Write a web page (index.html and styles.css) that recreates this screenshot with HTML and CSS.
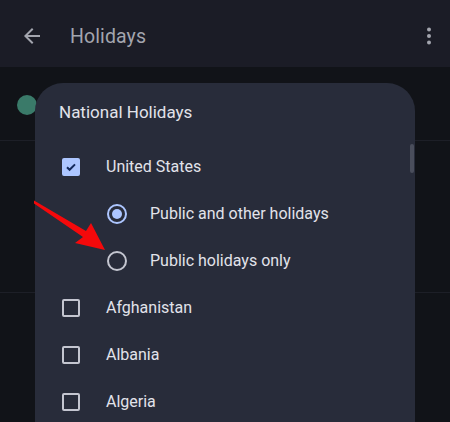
FILE: index.html
```html
<!DOCTYPE html>
<html>
<head>
<meta charset="utf-8">
<link rel="stylesheet" href="styles.css">
</head>
<body>
<div class="app">
  <header class="topbar">
    <svg class="back" width="24" height="24" viewBox="0 0 24 24"><path d="M20 11H7.83l5.59-5.59L12 4l-8 8 8 8 1.41-1.41L7.83 13H20v-2z" fill="#a3a5ae"/></svg>
    <span class="title">Holidays</span>
    <svg class="more" width="24" height="24" viewBox="0 0 24 24"><circle cx="12" cy="5.5" r="2" fill="#a3a5ae"/><circle cx="12" cy="12" r="2" fill="#a3a5ae"/><circle cx="12" cy="18.5" r="2" fill="#a3a5ae"/></svg>
  </header>
  <div class="bgrow first"><span class="dot"></span></div>
  <div class="bgrow second"></div>
  <div class="bgrow third"></div>

  <div class="dialog">
    <div class="scrollbar"></div>
    <h2 class="dtitle">National Holidays</h2>
    <div class="row">
      <span class="cb checked"><svg width="14" height="14" viewBox="0 0 14 14"><path d="M3 7.2l2.6 2.6L11 4.4" stroke="#142a5c" stroke-width="2" fill="none"/></svg></span>
      <span class="label">United States</span>
    </div>
    <div class="row sub">
      <span class="radio on"></span>
      <span class="label">Public and other holidays</span>
    </div>
    <div class="row sub">
      <span class="radio"></span>
      <span class="label">Public holidays only</span>
    </div>
    <div class="row"><span class="cb"></span><span class="label">Afghanistan</span></div>
    <div class="row"><span class="cb"></span><span class="label">Albania</span></div>
    <div class="row"><span class="cb"></span><span class="label">Algeria</span></div>
  </div>

  <svg class="arrow" width="450" height="422" viewBox="0 0 450 422">
    <polygon points="34,200.5 86,231 91,223 105,250 75,243 83,237 34,203.5" fill="#f5090b"/>
  </svg>
</div>
</body>
</html>
```
FILE: styles.css
```css
* { box-sizing: border-box; margin: 0; padding: 0; }
html, body { width: 450px; height: 422px; overflow: hidden; }
body { background: #111318; font-family: Roboto, "Noto Sans", sans-serif; }
.app { position: relative; width: 450px; height: 422px; overflow: hidden; }
.topbar {
  height: 67px;
  background: #1b1c26;
  display: flex;
  align-items: center;
  padding: 5px 9px 0 20px;
}
.back { margin-right: 26px; }
.title { flex: 1; color: #a3a5ae; font-size: 19.5px; letter-spacing: 0.1px; }
.bgrow { border-bottom: 1px solid #1d1f27; }
.bgrow.first { height: 74px; display: flex; align-items: center; padding-left: 17px; padding-top: 2px; }
.bgrow.second { height: 152px; }
.bgrow.third { height: 140px; border-bottom: none; }
.dot { width: 20px; height: 20px; border-radius: 50%; background: #3a7a69; }
.dialog {
  position: absolute;
  left: 35px;
  top: 83px;
  width: 380px;
  height: 360px;
  background: #282c3a;
  border-radius: 28px 28px 0 0;
  padding: 17px 0 0 24px;
}
.scrollbar {
  position: absolute;
  right: 1px;
  top: 61px;
  width: 4px;
  height: 29px;
  border-radius: 2px;
  background: #4a4e5c;
}
.dtitle { font-weight: 400; font-size: 17px; line-height: 24px; color: #e2e3ea; margin-bottom: 19px; }
.row { height: 47px; display: flex; align-items: center; padding-left: 3px; }
.row .label { color: #e2e3ea; font-size: 16px; }
.cb {
  width: 18px; height: 18px;
  border: 2px solid #c4c6d0;
  border-radius: 2px;
  margin-right: 26px;
  display: flex; align-items: center; justify-content: center;
}
.cb.checked { background: #adc6ff; border-color: #adc6ff; }
.row.sub { padding-left: 48px; }
.radio {
  width: 20px; height: 20px;
  border-radius: 50%;
  border: 2px solid #c4c6d0;
  margin-right: 23px;
  position: relative;
}
.radio.on { border-color: #adc6ff; }
.radio.on::after {
  content: "";
  position: absolute;
  left: 3px; top: 3px;
  width: 10px; height: 10px;
  border-radius: 50%;
  background: #adc6ff;
}
.arrow { position: absolute; left: 0; top: 0; pointer-events: none; }
```
